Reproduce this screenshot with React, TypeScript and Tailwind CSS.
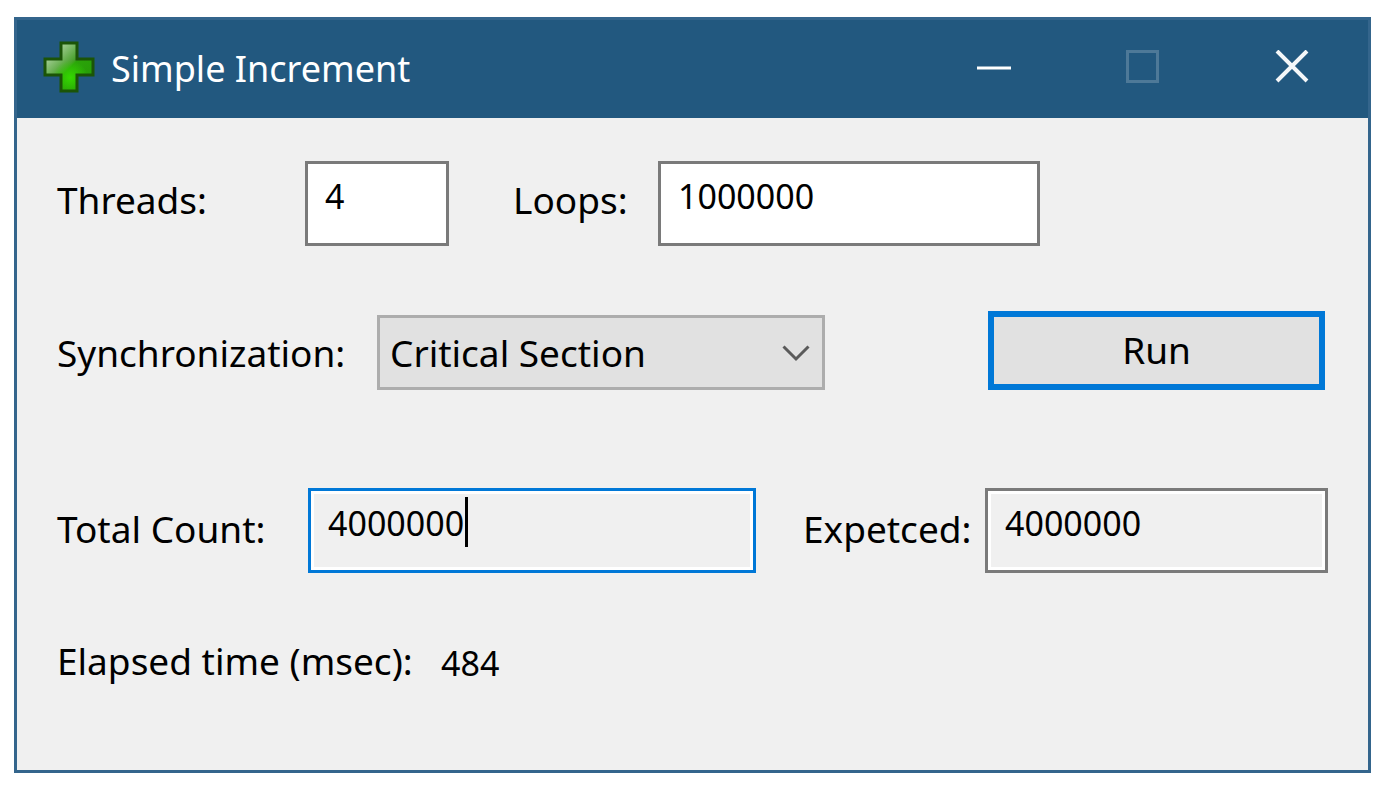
import React, { useState } from 'react';
import { clsx } from 'clsx';

interface FieldProps {
  id: string;
  value: string;
  onChange?: (value: string) => void;
  active?: boolean;
  className?: string;
}

const Field: React.FC<FieldProps> = ({ id, value, onChange, active = false, className = '' }) => {
  const readOnly = !onChange;

  return (
    <div
      className={clsx(
        'relative flex h-[85px] min-w-0 border-[3px]',
        active ? 'border-[#0078d7]' : 'border-[#7a7a7a]',
        className
      )}
    >
      <input
        id={id}
        type="text"
        value={value}
        readOnly={readOnly}
        onChange={(e) => onChange?.(e.target.value)}
        className={clsx(
          'w-full min-w-0 border-[3px] border-white pb-4 pl-[14px] text-[34px] text-black outline-none',
          readOnly ? 'bg-[#f0f0f0] caret-transparent' : 'bg-white'
        )}
      />
      {/* Text cursor */}
      {active && <span className="absolute top-[6px] left-[154px] h-[50px] w-[3px] bg-black" />}
    </div>
  );
};

const PlusIcon = () => (
  <svg className="mb-1 h-[52px] w-[52px] shrink-0" viewBox="0 0 52 52" aria-hidden="true">
    <defs>
      <linearGradient id="plus-light" x1="0" y1="0" x2="1" y2="1">
        <stop offset="0.2" stopColor="#9fcb90" />
        <stop offset="0.48" stopColor="#48a02c" />
        <stop offset="0.52" stopColor="#2ba30a" />
        <stop offset="1" stopColor="#249a04" />
      </linearGradient>
      <radialGradient id="plus-glow" cx="0.53" cy="0.72" r="0.36">
        <stop offset="0" stopColor="#35d800" />
        <stop offset="1" stopColor="#35d800" stopOpacity="0" />
      </radialGradient>
    </defs>
    <path d="M18 2H34V18H50V34H34V50H18V34H2V18H18Z" fill="url(#plus-light)" />
    <path
      d="M18 2H34V18H50V34H34V50H18V34H2V18H18Z"
      fill="url(#plus-glow)"
      stroke="#1b5407"
      strokeWidth="3"
      strokeLinejoin="miter"
    />
  </svg>
);

const TitleBar = () => (
  <header className="flex h-[98px] items-center bg-[#22587f] pl-[26px] text-white">
    <PlusIcon />
    <h1 className="flex-1 pl-4 text-[36px] whitespace-nowrap">Simple Increment</h1>
    <div className="flex h-full pr-[2px] pb-1">
      <button type="button" aria-label="Minimize" className="flex w-[149px] items-center justify-center">
        <svg className="h-[34px] w-[34px]" viewBox="0 0 34 34">
          <path d="M0 18H34" stroke="#fff" strokeWidth="3" />
        </svg>
      </button>
      <button type="button" aria-label="Maximize" disabled className="flex w-[149px] items-center justify-center">
        <svg className="h-[34px] w-[34px]" viewBox="0 0 34 34">
          <rect x="1.5" y="1.5" width="30" height="30" fill="none" stroke="#4e7998" strokeWidth="3" />
        </svg>
      </button>
      <button type="button" aria-label="Close" className="flex w-[149px] items-center justify-center">
        <svg className="h-[34px] w-[34px]" viewBox="0 0 34 34">
          <path d="M2 1L32 31M32 1L2 31" stroke="#f4f7f9" strokeWidth="4" />
        </svg>
      </button>
    </div>
  </header>
);

const App: React.FC = () => {
  const [threads, setThreads] = useState('4');
  const [loops, setLoops] = useState('1000000');
  const [sync, setSync] = useState('Critical Section');

  return (
    <div className="min-h-screen bg-white pt-[17px] pr-[9px] pb-3 pl-[14px] font-['Noto_Sans',sans-serif] text-[37px] leading-[48px] text-black">
      <main className="border-[3px] border-[#34658c] bg-[#f0f0f0]">
        <TitleBar />
        <form className="px-10 pt-[43px] pb-[83px]" onSubmit={(e) => e.preventDefault()}>
          <div className="flex items-center pr-[288px]">
            <label htmlFor="threads" className="w-[248px] shrink-0 pb-2">Threads:</label>
            <Field id="threads" value={threads} onChange={setThreads} className="w-[144px] shrink-0" />
            <label htmlFor="loops" className="ml-16 w-[145px] shrink-0 pb-2">Loops:</label>
            <Field id="loops" value={loops} onChange={setLoops} className="flex-1" />
          </div>

          <div className="mt-[65px] flex items-end justify-between pr-[3px]">
            <div className="flex items-center">
              <label htmlFor="sync" className="w-[320px] shrink-0">Synchronization:</label>
              <div className="relative w-[448px]">
                <select
                  id="sync"
                  value={sync}
                  onChange={(e) => setSync(e.target.value)}
                  className="block h-[75px] w-full appearance-none border-[3px] border-[#adadad] bg-[#e1e1e1] pl-[10px] outline-none"
                >
                  <option>Critical Section</option>
                </select>
                <svg
                  className="pointer-events-none absolute top-[30px] right-[15px] h-[17px] w-[28px]"
                  viewBox="0 0 28 17"
                  aria-hidden="true"
                >
                  <path d="M1.5 1.5L14 14L26.5 1.5" fill="none" stroke="#5a5a5a" strokeWidth="3" />
                </svg>
              </div>
            </div>
            <button type="submit" className="h-[79px] w-[337px] border-[6px] border-[#0078d7] bg-[#e1e1e1] pb-[2px]">
              Run
            </button>
          </div>

          <div className="mt-[98px] flex items-center">
            <label htmlFor="total" className="w-[251px] shrink-0 pb-1">Total Count:</label>
            <Field id="total" value="4000000" active className="flex-1" />
            <label htmlFor="expected" className="ml-[47px] w-[182px] shrink-0 pb-1">Expetced:</label>
            <Field id="expected" value="4000000" className="w-[343px] shrink-0" />
          </div>

          <div className="mt-16 flex items-start">
            <span className="w-[384px] shrink-0">Elapsed time (msec):</span>
            <output className="pt-[2px] text-[34px]">484</output>
          </div>
        </form>
      </main>
    </div>
  );
};

export default App;
